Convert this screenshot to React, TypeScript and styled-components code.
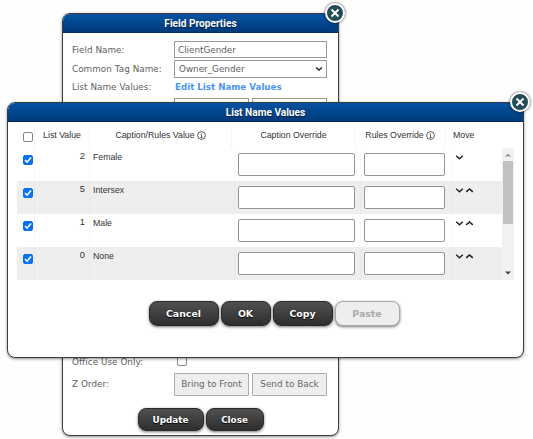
import React from "react";
import styled, { createGlobalStyle, css } from "styled-components";

const Global = createGlobalStyle`
  * { box-sizing: border-box; }
  body { margin: 0; background: #fff; overflow: hidden; }
  button, input, select { font: inherit; }
`;

const Desktop = styled.main`
  position: relative;
  width: 533px;
  height: 439px;
  overflow: hidden;
  background: #fefefe;
`;

const Dialog = styled.section<{ $x: number; $y: number; $w: number; $h: number }>`
  position: absolute;
  left: ${(p) => p.$x}px;
  top: ${(p) => p.$y}px;
  width: ${(p) => p.$w}px;
  height: ${(p) => p.$h}px;
  display: flex;
  flex-direction: column;
  border: 1px solid #3c3e42;
  border-radius: 8px;
  background: #fff;
  box-shadow: 0 1px 3px rgba(0, 0, 0, 0.45);
`;

const TitleBar = styled.header`
  flex: none;
  height: 19px;
  border-radius: 7px 7px 0 0;
  border-bottom: 1px solid #062c5c;
  background: linear-gradient(#0452a2, #003a7a);
  color: #fff;
  font: bold 10.15px/19px Roboto, sans-serif;
  text-align: center;
  text-shadow: 0 1px 1px #001c40;
`;

const CloseBadge = styled.button`
  position: absolute;
  top: -11px;
  right: -7px;
  width: 20px;
  height: 20px;
  padding: 0;
  display: flex;
  align-items: center;
  justify-content: center;
  border: 2px solid #fff;
  border-radius: 50%;
  background: #234b58;
  box-shadow: 0 0 3px rgba(0, 0, 0, 0.75);
`;

const Form = styled.div`
  flex: 1;
  display: grid;
  grid-template-columns: 102px 153px;
  grid-template-rows: 19px 19px 19px 19px 237px 19px 24px;
  padding: 8px 0 0 9px;
  color: #5e5e5e;
  font: 8.8px/17px "DejaVu Sans", sans-serif;
`;

const Label = styled.span<{ $drop?: number }>`
  align-self: start;
  padding-top: ${(p) => p.$drop ?? 0}px;
  letter-spacing: 0.05px;
  white-space: nowrap;
`;

const Value = styled.div`
  display: flex;
  align-items: flex-start;
  gap: 3px;
`;

const Field = styled.div`
  flex: 1;
  height: 17px;
  display: flex;
  align-items: center;
  justify-content: space-between;
  padding: 1px 3px 0;
  border: 1px solid #999;
  line-height: 16px;
`;

const Dropdown = styled(Field)`
  height: 18px;
  padding: 0 3px 0 4px;
`;

const Link = styled.a`
  padding-left: 1px;
  color: #4a94f7;
  font-weight: bold;
  font-size: 8.7px;
  white-space: nowrap;
`;

const SmallButton = styled.button`
  flex: 1;
  height: 23px;
  padding: 0;
  border: 1px solid #aaa;
  border-radius: 1px;
  background: #eee;
  color: #666;
  font-size: 8.9px;
  white-space: nowrap;
`;

const Actions = styled.footer<{ $bottom: number; $shift?: number }>`
  display: flex;
  justify-content: center;
  gap: 2px;
  padding: 0 0 ${(p) => p.$bottom}px ${(p) => p.$shift ?? 0}px;
`;

const Action = styled.button<{ $w: number; $h: number; $size?: number }>`
  width: ${(p) => p.$w}px;
  height: ${(p) => p.$h}px;
  padding: 0;
  border: 1px solid #292929;
  border-radius: 8px;
  background: linear-gradient(#505050, #2e2e2e);
  box-shadow: 0 1px 3px rgba(0, 0, 0, 0.55);
  color: #fff;
  font: bold ${(p) => p.$size ?? 9.4}px/20px "DejaVu Sans", sans-serif;
  text-shadow: 0 1px 1px #000;
  &:disabled {
    border-color: #a9a9a9;
    background: #eee;
    color: #aaa;
    text-shadow: none;
  }
`;

const Table = styled.div`
  flex: 1;
  padding: 4px 0 0 9px;
  color: #333;
  font: 8.75px/12px "Liberation Sans", Arial, sans-serif;
`;

const HeadRow = styled.div`
  display: grid;
  grid-template-columns: 18px 55px 142px 124px 89px 57px;
  height: 22px;
`;

const Head = styled.div<{ $left?: boolean }>`
  display: flex;
  align-items: center;
  justify-content: ${(p) => (p.$left ? "flex-start" : "center")};
  gap: 2px;
  padding: 0 0 4px ${(p) => (p.$left ? 8 : 0)}px;
  border-right: 1px solid #f4f4f4;
  white-space: nowrap;
  &:last-child { border-right: 0; }
`;

const Scroller = styled.div`
  display: flex;
  width: 497px;
  height: 132px;
`;

const Rows = styled.div`
  width: 485px;
`;

const Row = styled.div`
  display: grid;
  grid-template-columns: 18px 55px 145px 126px 91px 50px;
  height: 33px;
  &:nth-child(even) { background: #eee; }
`;

const Cell = styled.div<{ $kind: "check" | "number" | "text" | "input" | "move"; $end?: number }>`
  border-right: 1px solid rgba(0, 0, 0, 0.025);
  &:last-child { border-right: 0; }
  ${(p) => p.$kind === "check" && css`padding: 7px 0 0 6px;`}
  ${(p) => p.$kind === "number" && css`padding: 2px 4px 0 0; text-align: right; font-size: 9.3px;`}
  ${(p) => p.$kind === "text" && css`padding: 3px 0 0 3px;`}
  ${(p) => p.$kind === "input" && css`padding: 5px ${p.$end ?? 5}px 0 3px;`}
  ${(p) => p.$kind === "move" && css`display: flex; gap: 1px; padding: 5px 0 0 3px;`}
`;

const TextInput = styled.input`
  display: block;
  width: 100%;
  height: 23px;
  padding: 0 3px;
  border: 1px solid #949494;
  border-radius: 2px;
  background: #fff;
`;

const CheckBox = styled.span<{ $checked?: boolean }>`
  display: block;
  width: 10px;
  height: 10px;
  border: 1px solid ${(p) => (p.$checked ? "#0672ef" : "#858585")};
  border-radius: 2px;
  background: ${(p) => (p.$checked ? "#0672ef" : "#fff")};
  svg { display: block; }
`;

const HeadCheck = styled.div`
  padding: 6px 0 0 6px;
  border-right: 1px solid #f4f4f4;
`;

const OfficeCheck = styled.div`
  padding: 2px 0 0 3px;
`;

const ScrollBar = styled.div`
  width: 12px;
  display: flex;
  flex-direction: column;
  align-items: center;
  background: #f1f1f1;
`;

const ScrollArrow = styled.svg`
  flex: none;
  width: 12px;
  height: 13px;
`;

const Thumb = styled.div`
  width: 10px;
  height: 63px;
  margin-bottom: auto;
  background: #c1c1c1;
`;

const Check = ({ on = false }: { on?: boolean }) => (
  <CheckBox $checked={on} role="checkbox" aria-checked={on}>
    {on && (
      <svg width="8" height="8" viewBox="0 0 8 8">
        <path d="M1 4.2 3.1 6.2 7 1.5" fill="none" stroke="#fff" strokeWidth="1.6" />
      </svg>
    )}
  </CheckBox>
);

const Info = () => (
  <svg width="9" height="9" viewBox="0 0 9 9" fill="none" stroke="#333" strokeWidth=".8">
    <circle cx="4.5" cy="4.5" r="3.9" />
    <path d="M3.7 3.8h.9v2.8M3.5 6.6h2" />
    <path d="M4.1 2.4h.9" />
  </svg>
);

const Chevron = ({ up = false, size = 9 }: { up?: boolean; size?: number }) => (
  <svg width={size} height={size} viewBox="0 0 9 9" fill="none" stroke="#222" strokeWidth="1.5">
    <path d={up ? "M1.2 5.9 4.5 2.9 7.8 5.9" : "M1.2 2.7 4.5 5.7 7.8 2.7"} />
  </svg>
);

const CloseControl = () => (
  <CloseBadge aria-label="Close">
    <svg width="10" height="10" viewBox="0 0 10 10" stroke="#fff" strokeWidth="1.9">
      <path d="M1.5 1.5l7 7M8.5 1.5l-7 7" />
    </svg>
  </CloseBadge>
);

const items = [
  { value: 2, caption: "Female" },
  { value: 5, caption: "Intersex" },
  { value: 1, caption: "Male" },
  { value: 0, caption: "None" },
];

export default function App() {
  return (
    <>
      <Global />
      <Desktop>
        <Dialog $x={62} $y={13} $w={277} $h={423}>
          <TitleBar>Field Properties</TitleBar>
          <CloseControl />
          <Form>
            <Label $drop={1}>Field Name:</Label>
            <Value><Field>ClientGender</Field></Value>
            <Label $drop={1}>Common Tag Name:</Label>
            <Value><Dropdown>Owner_Gender<Chevron size={8} /></Dropdown></Value>
            <Label>List Name Values:</Label>
            <Value><Link>Edit List Name Values</Link></Value>
            <span />
            <Value><Field /><Field /></Value>
            <span /><span />
            <Label>Office Use Only:</Label>
            <OfficeCheck><Check /></OfficeCheck>
            <Label $drop={3}>Z Order:</Label>
            <Value>
              <SmallButton>Bring to Front</SmallButton>
              <SmallButton>Send to Back</SmallButton>
            </Value>
          </Form>
          <Actions $bottom={4}>
            <Action $w={66} $h={23} $size={8.8}>Update</Action>
            <Action $w={58} $h={23} $size={8.8}>Close</Action>
          </Actions>
        </Dialog>

        <Dialog $x={7} $y={102} $w={517} $h={256}>
          <TitleBar>List Name Values</TitleBar>
          <CloseControl />
          <Table>
            <HeadRow>
              <HeadCheck><Check /></HeadCheck>
              <Head>List Value</Head>
              <Head>Caption/Rules Value <Info /></Head>
              <Head>Caption Override</Head>
              <Head>Rules Override <Info /></Head>
              <Head $left>Move</Head>
            </HeadRow>
            <Scroller>
              <Rows>
                {items.map((item, i) => (
                  <Row key={item.value}>
                    <Cell $kind="check"><Check on /></Cell>
                    <Cell $kind="number">{item.value}</Cell>
                    <Cell $kind="text">{item.caption}</Cell>
                    <Cell $kind="input"><TextInput /></Cell>
                    <Cell $kind="input" $end={6}><TextInput /></Cell>
                    <Cell $kind="move"><Chevron />{i > 0 && <Chevron up />}</Cell>
                  </Row>
                ))}
              </Rows>
              <ScrollBar>
                <ScrollArrow viewBox="0 0 12 13"><path d="M3 8.5 6 5.5l3 3z" fill="#999" /></ScrollArrow>
                <Thumb />
                <ScrollArrow viewBox="0 0 12 13"><path d="M3 4.5 6 7.5l3-3z" fill="#444" /></ScrollArrow>
              </ScrollBar>
            </Scroller>
          </Table>
          <Actions $bottom={31} $shift={17}>
            <Action $w={70} $h={25}>Cancel</Action>
            <Action $w={50} $h={25}>OK</Action>
            <Action $w={60} $h={25}>Copy</Action>
            <Action $w={65} $h={25} disabled>Paste</Action>
          </Actions>
        </Dialog>
      </Desktop>
    </>
  );
}
